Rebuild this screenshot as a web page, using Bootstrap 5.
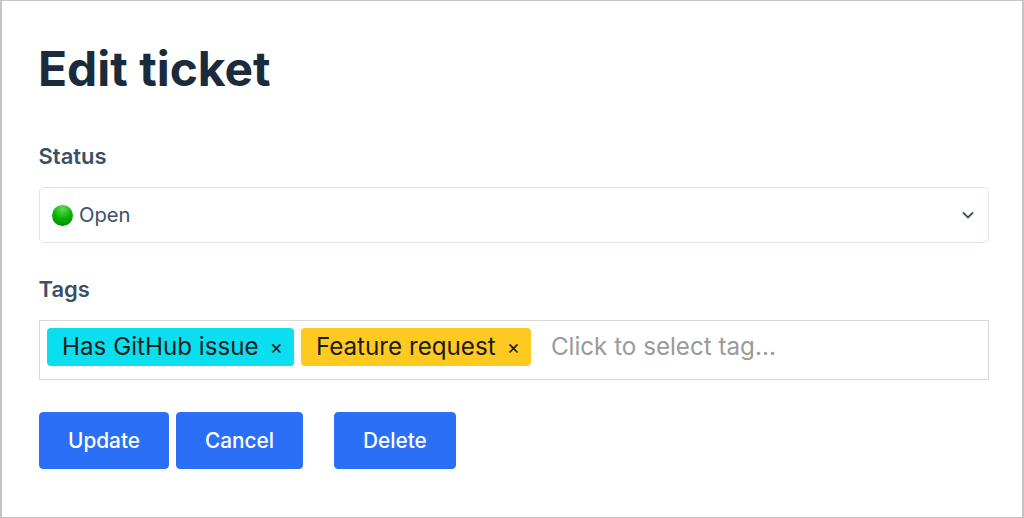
<!doctype html>
<html lang="en"><head><meta charset="utf-8">
<link href="https://cdn.jsdelivr.net/npm/bootstrap@5.3.0/dist/css/bootstrap.min.css" rel="stylesheet">
<style>
html,body{height:100%;margin:0}
body{font-family:Inter,"Liberation Sans",sans-serif;background:#fff}
.frame{height:518px;border:1px solid #c4c4c4;border-left-width:2px;border-right-width:2px;padding:0 33px 0 37px;overflow:hidden}
.ttl{font-size:47.9px;font-weight:700;line-height:56px;color:#1a2b3c;margin:40px 0 0 -1px}
.lbl{font-size:22px;font-weight:600;line-height:24px;color:#3c4f69;display:block;margin:0 0 0 -.5px}
.lbl-status{margin-top:47px}
.lbl-tags{margin-top:34px}
.sel{height:56px;margin-top:19px;border:1px solid #dde4ee;border-radius:5px;padding:0 13px 0 12px;color:#3c4f69;font-size:20.2px}
.dot{width:21px;height:21px;border-radius:50%;background:radial-gradient(circle at 50% 20%,#5fe04a 0,#0cb50c 45%,#008f00 85%);margin-right:6px}
.tagbox{height:60px;margin-top:19px;border:1px solid #d6d8da;padding:7px 7px 0;gap:7px}
.tg{height:38px;border-radius:4px;font-size:24.2px;color:#1a1a1a;padding:0 11px 0 15px}
.tg-x{font-size:20px;margin-left:11px}
.tg-c{background:#0adff0}.tg-y{background:#ffca1f}
.ph{color:#9a9a9a;font-size:24.2px;line-height:38px;margin-left:13px}
.acts{margin-top:32px}
.act{height:57px;border-radius:4px;font-size:20.8px;font-weight:500;background:#2a6ff6;border-color:#2a6ff6;padding:0 28px}
.gap-a{margin-right:7px}
.gap-b{margin-right:31px}
</style></head><body>
<div class="frame">
<h1 class="ttl">Edit ticket</h1>
<label class="lbl lbl-status">Status</label>
<div class="sel d-flex align-items-center"><span class="dot d-inline-block"></span><span>Open</span>
<svg class="ms-auto" width="14" height="10" viewBox="0 0 14 10"><path d="M2 2.5l5 5 5-5" fill="none" stroke="#3c4f69" stroke-width="1.8"/></svg></div>
<label class="lbl lbl-tags">Tags</label>
<div class="tagbox d-flex align-items-start">
<span class="tg tg-c d-flex align-items-center">Has GitHub issue<span class="tg-x">×</span></span>
<span class="tg tg-y d-flex align-items-center">Feature request<span class="tg-x">×</span></span>
<span class="ph">Click to select tag...</span></div>
<div class="d-flex acts">
<button class="btn btn-primary act gap-a">Update</button>
<button class="btn btn-primary act gap-b">Cancel</button>
<button class="btn btn-primary act">Delete</button>
</div>
</div>
</body></html>
